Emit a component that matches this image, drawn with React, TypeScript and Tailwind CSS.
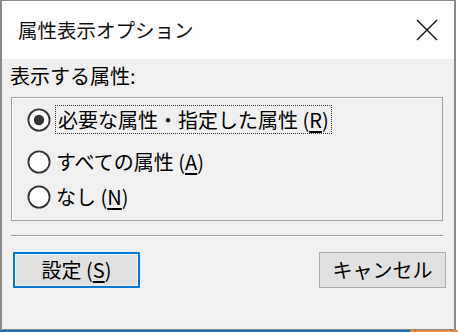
import React from "react";

const FONT = "font-['Meiryo_UI','Noto_Sans_CJK_JP',sans-serif]";

function Radio({ checked }: { checked?: boolean }) {
  return (
    <svg width="24" height="24" viewBox="0 0 24 24" className="shrink-0">
      <circle cx="12" cy="12" r="10.6" fill="#ffffff" stroke="#333333" strokeWidth="1.8" />
      {checked && <circle cx="12" cy="12" r="5.2" fill="#333333" />}
    </svg>
  );
}

function Mnemonic({ k }: { k: string }) {
  return (
    <>
      {" "}(<span className="underline underline-offset-[3px]">{k}</span>)
    </>
  );
}

export default function App() {
  return (
    <div className={`w-[458px] h-[332px] flex flex-col bg-white text-black ${FONT}`}>
      <div className="w-[456px] h-[330px] flex flex-col border-x-2 border-y border-[#8a8a8a]">
        {/* title bar */}
        <div className="h-[58px] flex items-center justify-between bg-white pl-[16px] pr-[16px]">
          <span className="text-[19.5px] leading-[24px] text-[#111]">属性表示オプション</span>
          <svg width="22" height="22" viewBox="0 0 22 22">
            <path d="M1 1 L21 21 M21 1 L1 21" stroke="#111" strokeWidth="1.4" />
          </svg>
        </div>

        {/* body */}
        <div className="flex-1 flex flex-col bg-[#f0f0f0] pt-[5px] text-[20px]">
          <div className="pl-[8px] h-[24px] leading-[24px]">表示する属性:</div>

          <div className="ml-[9px] mt-[9px] w-[432px] h-[124px] border border-[#a0a0a0] shadow-[inset_1px_1px_0_#ffffff] flex flex-col pt-[7px] pl-[15px]">
            <div className="h-[29px] flex items-center gap-[4px]">
              <Radio checked />
              <span className="h-[29px] leading-[27px] px-[2px] border border-dotted border-[#333]">
                <span>
                  必要な属性・指定した属性<Mnemonic k="R" />
                </span>
              </span>
            </div>
            <div className="mt-[13px] h-[29px] flex items-center gap-[5px]">
              <Radio />
              <span className="leading-[29px]">
                すべての属性<Mnemonic k="A" />
              </span>
            </div>
            <div className="mt-[6px] h-[29px] flex items-center gap-[5px]">
              <Radio />
              <span className="leading-[29px]">
                なし<Mnemonic k="N" />
              </span>
            </div>
          </div>

          <div className="ml-[9px] mt-[14px] w-[432px] h-[2px] border-t border-[#a0a0a0] border-b border-b-white" />

          <div className="mt-[15px] flex justify-between pl-[11px] pr-[8px]">
            <button
              type="button"
              className="w-[127px] h-[36px] border-2 border-[#0078d7] bg-[#e1e1e1] shadow-[inset_0_0_0_1px_#f4f4f4] text-[20px] leading-none"
            >
              設定<Mnemonic k="S" />
            </button>
            <button
              type="button"
              className="w-[127px] h-[36px] border border-[#adadad] bg-[#e1e1e1] text-[20px] leading-none"
            >
              キャンセル
            </button>
          </div>
        </div>
      </div>
      <div className="h-[2px] flex">
        <div className="w-[410px] bg-[#1e6fb5]" />
        <div className="flex-1 bg-[#e8883a]" />
      </div>
    </div>
  );
}
